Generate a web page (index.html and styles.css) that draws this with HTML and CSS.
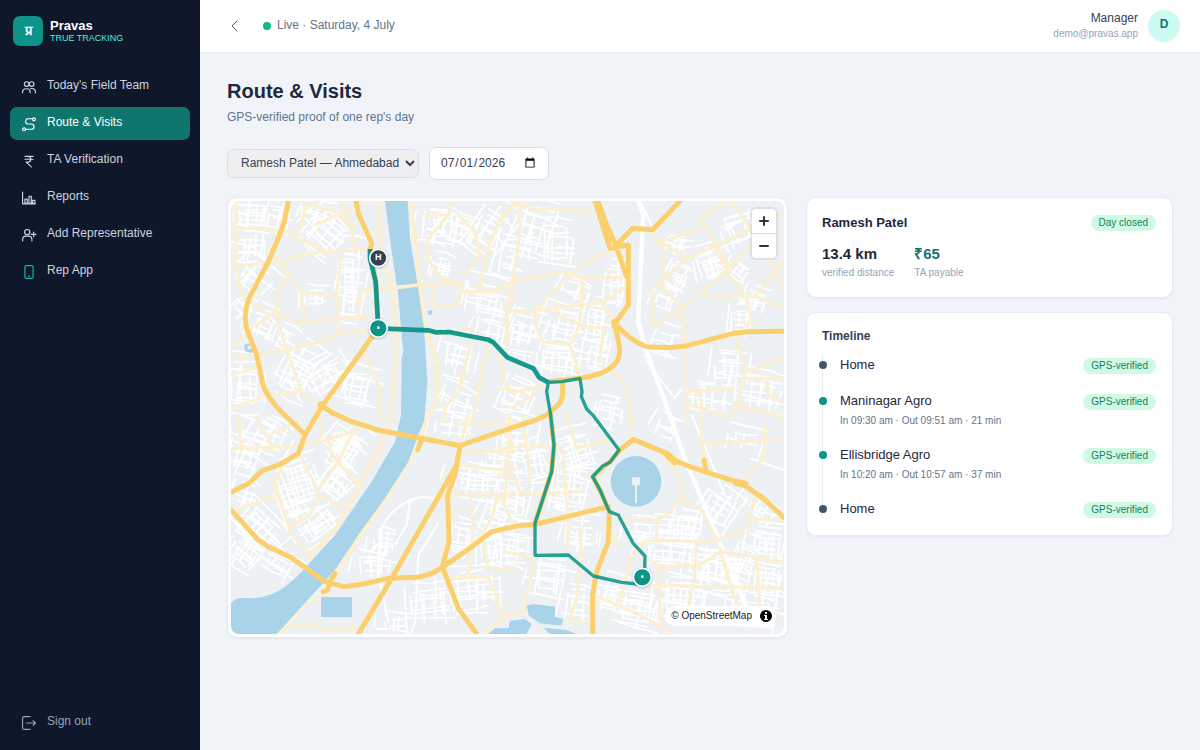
FILE: index.html
```html
<!DOCTYPE html>
<html lang="en">
<head>
<meta charset="utf-8">
<meta name="viewport" content="width=device-width, initial-scale=1">
<title>Pravas – Route &amp; Visits</title>
<link rel="stylesheet" href="styles.css">
</head>
<body>
<div class="app">
  <aside class="sidebar">
    <div class="brand">
      <span class="brand-mark">प्र</span>
      <div>
        <div class="brand-name">Pravas</div>
        <div class="brand-tag">TRUE TRACKING</div>
      </div>
    </div>
    <nav class="nav">
      <a class="nav-item" href="#"><svg class="icon" viewBox="0 0 24 24"><circle cx="8" cy="7" r="4"/><circle cx="16.500" cy="7" r="4"/><path d="M1 22v-1a6 6 0 0 1 6-6h1a6 6 0 0 1 6 6v1M15 14.500h2a6 6 0 0 1 6 6V22"/></svg><span>Today's Field Team</span></a>
      <a class="nav-item active" href="#"><svg class="icon" viewBox="0 0 24 24"><circle cx="3.500" cy="21" r="2.500"/><circle cx="20.500" cy="4" r="2.500"/><path d="M18 3H9a5 5 0 0 0 0 9h7a4.500 4.500 0 0 1 0 9H6"/></svg><span>Route &amp; Visits</span></a>
      <a class="nav-item" href="#"><svg class="icon" viewBox="0 0 24 24"><path d="M5 4h14M5 9h14M5 4h5a5 5 0 0 1 0 10H7l9 8"/></svg><span>TA Verification</span></a>
      <a class="nav-item" href="#"><svg class="icon" viewBox="0 0 24 24"><path d="M1 2v20h22M5 14h4v7H5zM12 9h4v12h-4zM18 16h4v5h-4z"/></svg><span>Reports</span></a>
      <a class="nav-item" href="#"><svg class="icon" viewBox="0 0 24 24"><circle cx="9" cy="7" r="4.500"/><path d="M1 22v-2a6 6 0 0 1 6-6h4a6 6 0 0 1 6 6v2M20 7v8M16 11h8"/></svg><span>Add Representative</span></a>
      <a class="nav-item" href="#"><svg class="icon phone" viewBox="0 0 24 24"><rect x="5" y="1" width="14" height="22" rx="2.500"/><path d="M11 19h2"/></svg><span>Rep App</span></a>
    </nav>
    <button class="nav-item sign-out" type="button"><svg class="icon" viewBox="0 0 24 24"><path d="M14 1H4a3 3 0 0 0-3 3v16a3 3 0 0 0 3 3h10M8 12h15M19 8l4 4-4 4"/></svg><span>Sign out</span></button>
  </aside>

  <div class="page">
    <header class="topbar">
      <button class="back" type="button" aria-label="Back"><svg viewBox="0 0 12 12"><path d="M8 1 3 6l5 5"/></svg></button>
      <div class="live"><span class="live-dot"></span><span>Live · Saturday, 4 July</span></div>
      <div class="account">
        <div class="account-text"><div class="account-role">Manager</div><div class="account-mail">demo@pravas.app</div></div>
        <span class="avatar">D</span>
      </div>
    </header>

    <main class="content">
      <h1>Route &amp; Visits</h1>
      <p class="subtitle">GPS-verified proof of one rep's day</p>
      <form class="filters">
        <select class="rep-select" aria-label="Representative"><option>Ramesh Patel — Ahmedabad</option></select>
        <input class="date-input" type="date" value="2026-07-01" aria-label="Date">
      </form>

      <div class="columns">
        <section class="card map-card" aria-label="Route map">
          <div class="map">
            <svg class="map-canvas" viewBox="18 18 1659 1299" preserveAspectRatio="xMidYMid slice">
              <path id="lanes" class="lane"/>
              <g class="rail">
                <path d="M1240 18 1255 60 1245 260 1240 380 1265 470 1340 675 1375 780 1475 1020 1575 1260"/>
                <path class="thin" d="M1180 200V330M1265 500 1350 610 1370 580M1400 660 1500 900M1250 30 1280 90M1575 790 1677 825M470 1030C460 980 520 920 590 905L640 910M465 1000 460 1140 490 1280M555 920 545 990 510 1050M640 985 580 1080 570 1290M400 1060 440 1070 460 1045"/>
              </g>
              <g class="street">
                <path d="M32 18V190L48 300 120 350M18 100H120L220 120M18 215 180 200 250 175 440 160M350 18 375 90 390 160M220 18 330 50 390 95M270 90 360 50 420 18M245 30 215 130 300 165M130 160 190 230 160 290 155 370 190 480 230 590 290 635M190 240 230 295 335 300M350 170 335 290 345 420M230 295 240 380M18 460 80 400 150 350 210 380 430 365M18 480C60 500 100 470 180 465L270 445 350 415 440 405M400 365 405 300 420 285 510 275M420 480 465 580 462 675"/>
                <path d="M625 275 620 330H700L710 268M705 290H800L870 255M680 18 670 60 610 130 608 190 650 250 700 265M700 60 750 110 765 180 720 240M870 20 820 80 790 160 760 290M740 400 735 460 700 590 660 640V675M18 540 90 520M18 640 130 600 230 590M610 420 680 410 740 400M800 440 770 520 760 600 740 675M820 470 840 570 870 590M850 440 845 340 870 300M600 60 670 60"/>
                <path class="wide" d="M460 18 470 200 500 270 515 420 500 650 480 720 400 880 340 990 250 1090M555 18 575 170 600 400 635 490V620L605 670 580 750 480 920 400 1030 330 1140"/>
              </g>
              <g class="street" transform="translate(825 0)">
                <path d="M50 18 62 100 40 250 20 350 18 450M0 80 50 20 110 45 180 40 265 50M0 285 40 260 190 230 260 250 385 245M335 165 260 200 210 240 110 340M18 350 110 345 240 330 305 325 385 270M105 345 110 400 130 440 210 450M245 250V340L235 400 210 450 240 550M170 345 175 360 250 395 310 400 300 500M305 325 340 380M340 530 380 570 395 675M0 580 50 590 140 570M35 640 100 600"/>
                <path d="M455 105 490 170V280L540 330 560 450V675M480 140 560 115 620 95 680 230 740 310 755 380 730 400M480 140 560 190 455 285 460 385 470 390 540 345 670 235 760 150M610 290 620 305 760 305 780 290 850 200M560 190 700 130 852 50M605 90 610 60 680 20M695 18 750 100 830 230 850 280M770 305 850 340M705 430 740 520 700 660M740 530 850 490M740 550H850M560 590 700 580M600 590 610 675M565 630 690 665M800 550 805 600 850 620M700 630 850 665M620 95 690 220"/>
              </g>
              <g class="street" transform="translate(0 660)">
                <path d="M18 290 155 240 145 210 180 140M225 120 270 210 280 240 345 275M280 240 255 300 195 335M150 210 195 350 255 420M18 100 230 95 400 45M310 75 320 120 400 210M385 50 340 140 285 220M290 540 240 570 160 657M200 635 250 625 310 645 400 635M730 0 710 80M700 150 770 160 870 165M640 250 690 240H870M720 110H870M735 240 745 330 730 490M820 240 800 310 770 360 790 460 870 465M830 250 860 320M670 490 790 485 835 605 780 657M840 605 890 590M95 10 140 90M40 0 50 110M130 60 220 20M690 30 870 25M850 0 860 100M280 0 290 60"/>
              </g>
              <g class="street" transform="translate(825 660)">
                <path d="M30 0 20 200 15 260M0 180 50 195 60 240 240 230M200 0 230 100 340 75M190 130 205 340 200 400M240 340 245 430 230 550 210 610M100 430 90 500 70 590 0 610M18 410 100 430M400 0 395 75M480 100 540 190 545 250 500 300 470 315 360 318M470 315V375M650 378H435L390 430 375 500 360 560M650 378 740 340 770 230M440 430 480 455V640M440 510 852 520M480 455 600 450 660 410 852 440"/>
                <path d="M590 380 585 480 560 600M745 310 852 320M600 20 615 150M615 85 852 75M730 200 790 130 800 20M280 540 420 600 520 657M770 420 780 600M545 255 600 280 650 370M200 610 260 625M660 400 700 540 740 620M0 100 110 90 200 110M70 0 90 200M340 360 355 390"/>
              </g>
              <g class="water">
                <path d="M480 18H548L555 130 578 270 597 400 607 560 598 675 580 720 550 800 480 910 400 1020 330 1125 280 1180 155 1317H18V1225C25 1215 40 1205 70 1210 140 1210 180 1180 230 1130L330 1020 440 860 510 740 528 660 530 490 535 470 528 400 520 300 500 170Z"/>
                <path d="M288 1206h93v60h-93zM905 1232 925 1227 990 1235V1265L1015 1272 1010 1292 945 1285 912 1262ZM790 1317 810 1300H850L855 1278 900 1272 920 1288 905 1317ZM955 1298 1025 1305 1055 1317H975ZM608 349l10-4 6 5-6 10-9-2z"/>
                <path d="M60 448 58 455 60 468 77 474 96 468 96 458 90 464 78 462 68 464 67 454 80 450 80 444z"/>
                <circle class="moat" cx="1233" cy="859" r="96"/>
                <circle cx="1233" cy="859" r="76"/>
              </g>
              <path class="islet" d="M1221 847h24v24h-9v54h-6v-54h-9z"/>
              <path class="bridge" d="M510 278 580 270 710 267"/>
              <g class="highway">
                <path d="M190 18 178 80 160 130 130 200 72 310C60 340 58 370 65 400L95 480 110 550 C115 590 150 635 195 675L240 720M393 18 400 55 440 145 435 165 452 260 460 400 290 635 240 720 220 775 165 808 110 828 72 865 18 892"/>
                <path d="M290 632 325 655 380 680 460 705 520 717 600 732 705 752 870 695 925 678 965 660 1005 625 1013 600 1013 562M600 732 588 738 578 765M18 945 100 1035 130 1055 200 1088 300 1160 355 1175 410 1168 490 1150 575 1147C620 1140 640 1125 655 1115L720 1070 800 1010 875 993 930 988 1025 965 1150 935M705 755 695 810 500 1150 400 1317M705 755 690 840 668 900 672 1040 652 1115 700 1240 755 1317M330 1135 315 1160 308 1185 295 1190"/>
                <path d="M1110 18 1155 160 1210 150V330L1170 385M1125 45 1170 145 1205 245M1175 150 1223 100 1283 104 1365 18M1170 385C1200 420 1235 445 1265 455L1330 458 1385 452 1525 415 1565 410 1677 409M1170 385C1175 430 1195 470 1175 500 1155 530 1105 545 1065 550L970 560"/>
                <path d="M1185 765 1225 733 1325 775 1345 795 1395 815 1465 838 1550 865 1615 910 1677 968M1437 795 1443 830M1185 765 1155 800 1103 845 1125 885 1153 950 1150 1040 1115 1130 1103 1200V1317M930 988V985L980 830 987 750 977 660"/>
                <path class="broad" d="M1115 18 1125 45 1155 130M1330 782 1350 800M1535 862 1560 868M1170 382V392M288 630 292 634"/>
              </g>
              <g class="route">
                <path class="leg-main" d="M435 162V190L452 260 460 400 610 406 632 412 672 411 790 434 805 442 847 487 925 520 943 548 970 562"/>
                <path class="leg" d="M970 562 1010 560 1065 550 1071 590 1069 605 1085 642 1105 662 1182 765 1155 802 1132 814 1103 845 1125 885 1153 950 1180 960 1225 1046 1260 1083 1258 1148 1235 1167 1190 1162 1105 1143 1030 1080 930 1081V985L980 830 987 750 977 660 965 590 970 562"/>
              </g>
              <g class="pin home"><circle cx="460" cy="189" r="26"/><text x="460" y="196">H</text></g>
              <g class="pin"><circle cx="460" cy="400" r="27"/><circle class="core" cx="460" cy="398" r="4"/></g>
              <g class="pin"><circle cx="1252" cy="1147" r="27"/><circle class="core" cx="1252" cy="1145" r="4"/></g>
            </svg>
            <div class="zoom-control">
              <button type="button" aria-label="Zoom in"><svg viewBox="0 0 24 24"><path d="M12 8v8M8 12h8"/></svg></button>
              <button type="button" aria-label="Zoom out"><svg viewBox="0 0 24 24"><path d="M8 12h8"/></svg></button>
            </div>
            <div class="attribution"><a href="#">© OpenStreetMap</a><svg viewBox="0 0 12 12"><circle cx="6" cy="6" r="6"/><path d="M5 2h2v2H5zM4 5h3v4h1v1H4V9h1V6H4z"/></svg></div>
          </div>
        </section>

        <div class="side">
          <section class="card summary">
            <div class="summary-head"><h2>Ramesh Patel</h2><span class="pill">Day closed</span></div>
            <div class="stats">
              <div><div class="stat">13.4 km</div><div class="stat-label">verified distance</div></div>
              <div><div class="stat pay">₹65</div><div class="stat-label">TA payable</div></div>
            </div>
          </section>
          <section class="card timeline">
            <h3>Timeline</h3>
            <ol class="stops">
              <li class="stop"><div class="stop-name">Home</div><span class="pill">GPS-verified</span></li>
              <li class="stop visit"><div><div class="stop-name">Maninagar Agro</div><div class="stop-time">In 09:30 am · Out 09:51 am · 21 min</div></div><span class="pill">GPS-verified</span></li>
              <li class="stop visit"><div><div class="stop-name">Ellisbridge Agro</div><div class="stop-time">In 10:20 am · Out 10:57 am · 37 min</div></div><span class="pill">GPS-verified</span></li>
              <li class="stop"><div class="stop-name">Home</div><span class="pill">GPS-verified</span></li>
            </ol>
          </section>
        </div>
      </div>
    </main>
  </div>
</div>
<script src="map.js"></script>
</body>
</html>
```
FILE: map.js
```js
// Local lanes: irregular street grids, one per neighbourhood.
// Each block is [centre x, centre y, width, height, angle, spacing].
const blocks = [
  [80, 60, 110, 70, 2, 17], [75, 155, 90, 90, 0, 22], [160, 70, 70, 80, 10, 24], [300, 120, 110, 100, 40, 20],
  [90, 250, 90, 70, 35, 24], [280, 60, 90, 60, 15, 26], [375, 230, 60, 130, 2, 14], [270, 310, 60, 60, 0, 22],
  [380, 310, 40, 130, 2, 16], [110, 390, 80, 90, 20, 24], [60, 340, 60, 60, 40, 24], [60, 570, 80, 130, 0, 20],
  [220, 530, 90, 130, 25, 21], [300, 540, 130, 80, -35, 20], [390, 580, 110, 90, 10, 18], [180, 430, 60, 50, 20, 24],
  [640, 90, 80, 100, 5, 20], [700, 100, 80, 80, 20, 20], [650, 220, 60, 60, 10, 16], [790, 110, 80, 130, 30, 24],
  [790, 320, 120, 90, 10, 24], [700, 480, 80, 100, 10, 26], [800, 400, 90, 90, 12, 28], [700, 630, 100, 70, 20, 28],
  [930, 110, 90, 130, 15, 26], [1000, 150, 100, 110, 0, 30], [860, 190, 60, 110, 10, 28], [900, 420, 90, 110, 10, 26],
  [1020, 400, 110, 110, 10, 22], [1000, 500, 130, 80, 5, 17], [1110, 380, 50, 100, 8, 18], [1120, 470, 60, 110, 10, 22],
  [880, 610, 90, 100, 20, 26], [1060, 290, 90, 50, 20, 30], [1170, 270, 40, 120, 0, 28],
  [1460, 210, 70, 90, -20, 12], [1360, 150, 60, 50, 10, 16], [1360, 250, 60, 70, 25, 22], [1540, 110, 100, 90, -25, 26],
  [1540, 230, 50, 40, 35, 14], [1590, 320, 60, 60, 20, 14], [1550, 370, 60, 80, 0, 20], [1320, 310, 60, 60, 20, 28],
  [1320, 460, 70, 90, 15, 32], [1510, 520, 80, 90, 0, 18], [1600, 590, 130, 110, 8, 28], [1440, 610, 80, 80, 0, 26],
  [60, 770, 90, 120, 15, 18], [130, 730, 80, 110, 25, 20], [230, 860, 100, 130, -20, 15], [345, 750, 70, 80, 35, 15],
  [370, 780, 70, 120, 32, 14], [330, 870, 80, 90, 35, 13], [210, 940, 70, 90, -25, 16], [280, 990, 110, 70, -35, 13],
  [100, 1000, 130, 90, 40, 18], [60, 1080, 90, 80, 35, 18], [160, 1110, 110, 60, 30, 18], [60, 900, 70, 60, 20, 24],
  [480, 1050, 70, 70, 5, 15], [440, 1110, 80, 60, 0, 26], [760, 860, 130, 70, 5, 15], [810, 820, 60, 60, 5, 20],
  [710, 1030, 60, 90, 10, 18], [820, 970, 80, 100, 20, 24], [800, 1060, 60, 110, -5, 16], [620, 1230, 120, 90, -8, 24],
  [740, 1190, 130, 110, -8, 20], [520, 1290, 90, 40, 0, 24], [690, 700, 110, 60, 5, 26],
  [870, 740, 80, 130, 5, 20], [860, 910, 80, 100, 5, 20], [930, 800, 70, 110, -15, 22], [1050, 770, 90, 110, -20, 20],
  [1040, 880, 90, 110, 5, 18], [1000, 920, 60, 50, 5, 18], [1070, 1020, 90, 80, 5, 22], [870, 1050, 90, 110, 5, 22],
  [970, 1150, 110, 100, 5, 26], [1060, 1230, 80, 90, 5, 22], [1340, 1010, 130, 70, 3, 14], [1400, 990, 70, 80, 5, 16],
  [1250, 1020, 70, 60, 5, 18], [1330, 1080, 130, 60, 3, 20], [1480, 940, 80, 90, 30, 20], [1440, 1110, 100, 90, 5, 16],
  [1240, 1240, 150, 100, 10, 14], [1160, 1200, 70, 90, 12, 15], [1370, 1200, 130, 100, 5, 16], [1500, 1150, 90, 110, 5, 22],
  [1630, 1040, 90, 110, 5, 15], [1630, 1160, 90, 110, 5, 15], [1560, 1100, 70, 110, 20, 18], [1590, 1260, 140, 80, 5, 20],
  [1600, 940, 80, 60, 30, 22], [1560, 740, 80, 60, 10, 34], [1330, 700, 60, 60, 20, 28], [1150, 650, 70, 70, 10, 26]
];

let seed = 41;
const random = () => {
  seed = (seed * 16807) % 2147483647;
  return seed / 2147483647;
};

const drawBlock = ([cx, cy, w, h, angle, step]) => {
  const a = angle * Math.PI / 180;
  const at = (x, y) => {
    const px = Math.round(cx + x * Math.cos(a) - y * Math.sin(a));
    const py = Math.round(cy + x * Math.sin(a) + y * Math.cos(a));
    return px + " " + py;
  };
  const jitter = () => (random() - 0.5) * step * 0.6;
  let d = "";
  for (let y = -h / 2; y <= h / 2; y += step) {
    const start = -w / 2 + random() * w * 0.3;
    const end = w / 2 - random() * w * 0.3;
    const row = y + jitter();
    d += "M" + at(start, row) + "L" + at((start + end) / 2, row + jitter() / 2) + " " + at(end, row + jitter() / 2);
  }
  for (let x = -w / 2; x <= w / 2; x += step * 1.3) {
    const start = -h / 2 + random() * h * 0.4;
    const end = h / 2 - random() * h * 0.3;
    const col = x + jitter();
    d += "M" + at(col, start) + "L" + at(col + jitter() / 2, end);
  }
  return d;
};

// Longer back streets that tie each neighbourhood to its surroundings.
const outskirts = blocks.map(([cx, cy, w, h, angle]) => [cx, cy, w * 1.5, h * 1.4, angle + 6, 44]);

document.getElementById("lanes").setAttribute("d", blocks.concat(outskirts).map(drawBlock).join(""));
```
FILE: styles.css
```css
* { box-sizing: border-box; }

body {
  margin: 0;
  background: #f0f4f9;
  color: #1e293b;
  font: 12px/16px "Liberation Sans", Arial, sans-serif;
}

h1, h2, h3, p, ol { margin: 0; padding: 0; }
button, select, input { font: inherit; color: inherit; }
button { border: 0; background: none; cursor: pointer; }
a { color: inherit; text-decoration: none; }

.app { display: flex; min-height: 100vh; }

.sidebar {
  display: flex;
  flex-direction: column;
  flex: 0 0 200px;
  padding: 16px 10px 11px;
  background: #0f172a;
  color: #cbd5e1;
}

.brand { display: flex; align-items: center; gap: 7px; padding: 0 3px; }
.brand-mark {
  display: grid;
  place-items: center;
  width: 30px;
  height: 30px;
  border-radius: 7px;
  background: #0d9488;
  color: #fff;
  font-size: 13px;
  font-weight: 700;
}
.brand-name { color: #fff; font-size: 13px; font-weight: 700; line-height: 15px; }
.brand-tag { color: #5eead4; font-size: 9px; line-height: 11px; }

.nav { display: flex; flex-direction: column; gap: 4px; margin-top: 24px; }
.nav-item {
  display: flex;
  align-items: center;
  gap: 11px;
  height: 33px;
  padding: 0 12px;
  border-radius: 7px;
}
.nav-item span { padding-bottom: 4px; }
.nav-item.active { background: #0f766e; color: #fff; }
.sign-out { margin-top: auto; color: #94a3b8; text-align: left; }

.icon {
  flex: none;
  width: 14px;
  height: 14px;
  overflow: visible;
  fill: none;
  stroke: currentColor;
  stroke-width: 2;
  stroke-linecap: round;
  stroke-linejoin: round;
}
.phone { color: #14b8a6; }

.page { flex: 1; min-width: 0; }

.topbar {
  display: flex;
  align-items: center;
  height: 53px;
  padding: 0 20px 0 27px;
  background: #fff;
  border-bottom: 1px solid #e8edf3;
}
.back { display: grid; padding: 2px; color: #475569; }
.back svg { width: 12px; height: 12px; fill: none; stroke: currentColor; stroke-linecap: round; stroke-linejoin: round; }
.live { display: flex; align-items: center; gap: 6px; margin-left: 20px; color: #64748b; }
.live span { padding-bottom: 2px; }
.live .live-dot { width: 8px; height: 8px; padding: 0; border-radius: 50%; background: #10b981; }
.account { display: flex; align-items: center; gap: 10px; margin-left: auto; text-align: right; }
.account-role { color: #334155; line-height: 15px; }
.account-mail { color: #94a3b8; font-size: 10px; line-height: 15px; }
.avatar {
  display: grid;
  place-items: center;
  width: 32px;
  height: 32px;
  padding-bottom: 4px;
  border-radius: 50%;
  background: #ccfbf1;
  color: #0f766e;
  font-weight: 700;
}

.content { padding: 25px 27px; }
h1 { font-size: 20px; line-height: 26px; }
.subtitle { margin-top: 5px; color: #64748b; }

.filters { display: flex; align-items: center; gap: 10px; margin-top: 22px; color: #334155; }
.rep-select {
  width: 192px;
  height: 29px;
  padding: 0 0 2px 9px;
  border: 1px solid #d5dfea;
  border-radius: 7px;
  background-color: #efefef;
}
.date-input {
  width: 120px;
  height: 33px;
  padding: 0 10px 2px;
  border: 1px solid #d5dfea;
  border-radius: 7px;
  background: #fff;
}

.columns {
  display: grid;
  grid-template-columns: 561fr 367fr;
  gap: 18px;
  align-items: start;
  margin-top: 17px;
}
.card {
  border: 1px solid #e6ecf3;
  border-radius: 10px;
  background: #fff;
  box-shadow: 0 1px 2px rgba(15, 23, 42, 0.06);
}
.map-card { padding: 3px; }
.map { position: relative; height: 433px; overflow: hidden; border-radius: 8px; background: #edf1f4; }
.map-canvas { display: block; width: 100%; height: 100%; }
.map-canvas path { fill: none; stroke-linejoin: round; }
.map-canvas .lane { stroke: #fff; stroke-width: 5; }
.rail path { stroke: #fff; stroke-width: 13; }
.rail .thin { stroke-width: 6; }
.street path { stroke: #fdf0d0; stroke-width: 9; stroke-linecap: round; }
.street .wide { stroke-width: 12; }
.water path, .water circle { fill: #a9d3e8; }
.water .moat { fill: #edf1f4; }
.map-canvas .islet { fill: #edf1f4; }
.map-canvas .bridge { stroke: #fdf0d0; stroke-width: 11; }
.highway path { stroke: #fbd06c; stroke-width: 15; stroke-linecap: round; }
.highway .broad { stroke-width: 22; }
.route path { stroke: #0d9488; opacity: 0.88; }
.route .leg-main { stroke-width: 14; opacity: 0.96; }
.route .leg { stroke-width: 10; }
.pin circle { fill: #0d9488; stroke: #fff; stroke-width: 5; filter: drop-shadow(0 2px 3px rgba(15, 23, 42, 0.3)); }
.pin .core { fill: #fff; stroke: none; filter: none; }
.home circle { fill: #334155; }
.home text { fill: #fff; font-size: 27px; font-weight: 700; text-anchor: middle; }

.zoom-control {
  position: absolute;
  top: 8px;
  right: 8px;
  width: 24px;
  border-radius: 4px;
  background: #fff;
  box-shadow: 0 0 0 2px rgba(0, 0, 0, 0.07);
}
.zoom-control button { display: block; width: 24px; height: 24px; padding: 0; }
.zoom-control button + button { height: 25px; border-top: 1px solid #ddd; }
.zoom-control svg { display: block; width: 24px; height: 24px; }
.zoom-control path { fill: none; stroke: #333; stroke-width: 2; stroke-linecap: round; }

.attribution {
  position: absolute;
  right: 8px;
  bottom: 8px;
  display: flex;
  align-items: center;
  gap: 8px;
  height: 20px;
  padding: 0 4px 0 6px;
  border-radius: 12px;
  background: #fff;
  color: #222;
  font-size: 10px;
}
.attribution svg { width: 12px; height: 12px; }
.attribution path { fill: #fff; }

.side { display: grid; gap: 14px; }
.summary { padding: 15px 16px 16px 15px; }
.summary-head { display: flex; align-items: center; justify-content: space-between; }
h2 { font-size: 13px; line-height: 20px; }
.pill {
  flex: none;
  height: 16px;
  padding: 0 8px;
  border-radius: 8px;
  background: #d1fae5;
  color: #15805d;
  font-size: 10px;
  line-height: 15px;
}
.stats { display: flex; gap: 20px; margin-top: 10px; }
.stat { font-size: 15px; font-weight: 700; line-height: 22px; }
.pay { color: #0f766e; }
.stat-label { color: #94a3b8; font-size: 10px; line-height: 16px; }

.timeline { padding: 15px 16px 17px 15px; }
h3 { color: #334155; font-size: 12px; line-height: 16px; }
.stops { margin-top: 10px; border-left: 1px solid #e8edf3; list-style: none; }
.stop {
  position: relative;
  display: flex;
  align-items: flex-start;
  justify-content: space-between;
  padding: 2px 0 16px 17px;
}
.stop:last-child { padding-bottom: 0; }
.stop::before {
  content: "";
  position: absolute;
  top: 7px;
  left: -4px;
  width: 8px;
  height: 8px;
  border-radius: 50%;
  background: #475569;
}
.visit::before { background: #0d9488; }
.stop-name { font-size: 13px; line-height: 18px; }
.stop .pill { margin-top: 2px; }
.stop-time { margin-top: 4px; color: #64748b; font-size: 10px; line-height: 14px; }
```
